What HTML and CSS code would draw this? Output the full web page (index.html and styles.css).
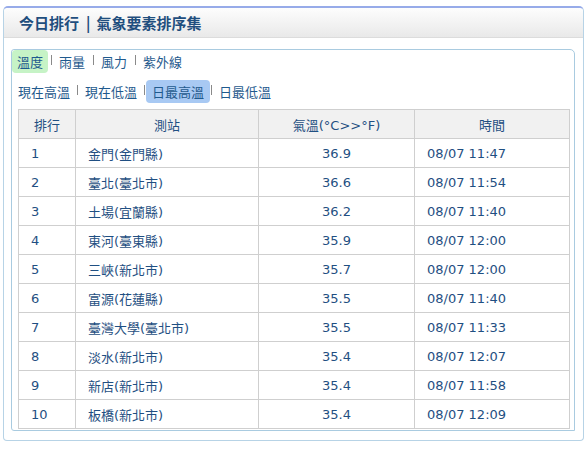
FILE: index.html
```html
<!DOCTYPE html>
<html lang="zh-Hant">
<head>
<meta charset="utf-8">
<title>今日排行</title>
<link rel="stylesheet" href="styles.css">
</head>
<body>
<div class="panel">
  <div class="panel-head">今日排行<span class="bar">|</span>氣象要素排序集</div>
  <div class="panel-body">
    <div class="box">
      <div class="tabs tabs-main">
        <span class="tab tab-green">溫度</span><span class="sep"></span><span class="tab">雨量</span><span class="sep"></span><span class="tab">風力</span><span class="sep"></span><span class="tab">紫外線</span>
      </div>
      <div class="tabs tabs-sub">
        <span class="tab">現在高溫</span><span class="sep"></span><span class="tab">現在低溫</span><span class="sep"></span><span class="tab tab-blue">日最高溫</span><span class="sep"></span><span class="tab">日最低溫</span>
      </div>
      <table class="rank">
        <colgroup>
          <col class="c1"><col class="c2"><col class="c3"><col class="c4">
        </colgroup>
        <thead>
          <tr><th>排行</th><th>測站</th><th>氣溫(°C&gt;&gt;°F)</th><th>時間</th></tr>
        </thead>
        <tbody>
          <tr><td>1</td><td>金門(金門縣)</td><td class="num">36.9</td><td>08/07 11:47</td></tr>
          <tr><td>2</td><td>臺北(臺北市)</td><td class="num">36.6</td><td>08/07 11:54</td></tr>
          <tr><td>3</td><td>土場(宜蘭縣)</td><td class="num">36.2</td><td>08/07 11:40</td></tr>
          <tr><td>4</td><td>東河(臺東縣)</td><td class="num">35.9</td><td>08/07 12:00</td></tr>
          <tr><td>5</td><td>三峽(新北市)</td><td class="num">35.7</td><td>08/07 12:00</td></tr>
          <tr><td>6</td><td>富源(花蓮縣)</td><td class="num">35.5</td><td>08/07 11:40</td></tr>
          <tr><td>7</td><td>臺灣大學(臺北市)</td><td class="num">35.5</td><td>08/07 11:33</td></tr>
          <tr><td>8</td><td>淡水(新北市)</td><td class="num">35.4</td><td>08/07 12:07</td></tr>
          <tr><td>9</td><td>新店(新北市)</td><td class="num">35.4</td><td>08/07 11:58</td></tr>
          <tr><td>10</td><td>板橋(新北市)</td><td class="num">35.4</td><td>08/07 12:09</td></tr>
        </tbody>
      </table>
    </div>
  </div>
</div>
</body>
</html>
```

FILE: styles.css
```css
html, body {
  margin: 0;
  padding: 0;
  background: #ffffff;
}

body {
  font-family: "DejaVu Sans", "Noto Sans CJK TC", sans-serif;
  font-size: 13px;
  color: #1f4f82;
}

.panel {
  margin: 6px 4px 0 3px;
  border: 1px solid #b7d3e6;
  border-top: 2px solid #97abe9;
  border-radius: 5px 5px 4px 4px;
  background: #ffffff;
}

.panel-head {
  height: 29px;
  line-height: 29px;
  padding-left: 15px;
  font-family: "Noto Sans CJK TC", sans-serif;
  font-size: 15px;
  font-weight: bold;
  color: #1f4e7e;
  background: linear-gradient(#fdfdfd, #e9e9e9);
  border-bottom: 1px solid #dcdcdc;
  border-radius: 4px 4px 0 0;
}

.bar {
  display: inline-block;
  margin: 0 6px 0 7px;
}

.panel-body {
  padding: 11px 8px 9px 7px;
}

.box {
  border: 1px solid #a9cbe0;
  border-radius: 3px 5px 0 3px;
  padding-bottom: 1px;
}

.tabs {
  display: flex;
  align-items: center;
  font-family: "Noto Sans CJK TC", sans-serif;
  font-size: 13px;
}

.tabs-main {
  height: 23px;
}

.tabs-sub {
  height: 23px;
  margin-top: 7px;
}

.tab {
  display: inline-block;
  height: 23px;
  line-height: 23px;
  padding: 0 5px;
  border-radius: 4px;
  color: #1f5a8e;
}

.tabs-sub .tab {
  padding: 0 6px;
}

.tab-green {
  background: #c6f3c6;
}

.tab-blue {
  background: #a8c9f3;
}

.sep {
  display: inline-block;
  width: 1px;
  height: 10px;
  margin: 0 2px 4px 3px;
  background: #8a8a8a;
}

.tabs-sub .sep {
  margin: 0 1px 4px 1px;
}

.rank {
  margin: 6px 6px 0 6px;
  width: 551px;
  table-layout: fixed;
  border-collapse: collapse;
  font-size: 13px;
}

.rank .c1 { width: 57px; }
.rank .c2 { width: 183px; }
.rank .c3 { width: 156px; }
.rank .c4 { width: 155px; }

.rank th,
.rank td {
  height: 28px;
  padding: 0 0 0 12px;
  border: 1px solid #cfcfcf;
  text-align: left;
  font-weight: normal;
  color: #1f4f82;
  white-space: nowrap;
  overflow: hidden;
}

.rank th {
  background: #f1f1f1;
  text-align: center;
  padding: 0;
}

.rank td.num {
  text-align: center;
  padding: 0;
}
```
